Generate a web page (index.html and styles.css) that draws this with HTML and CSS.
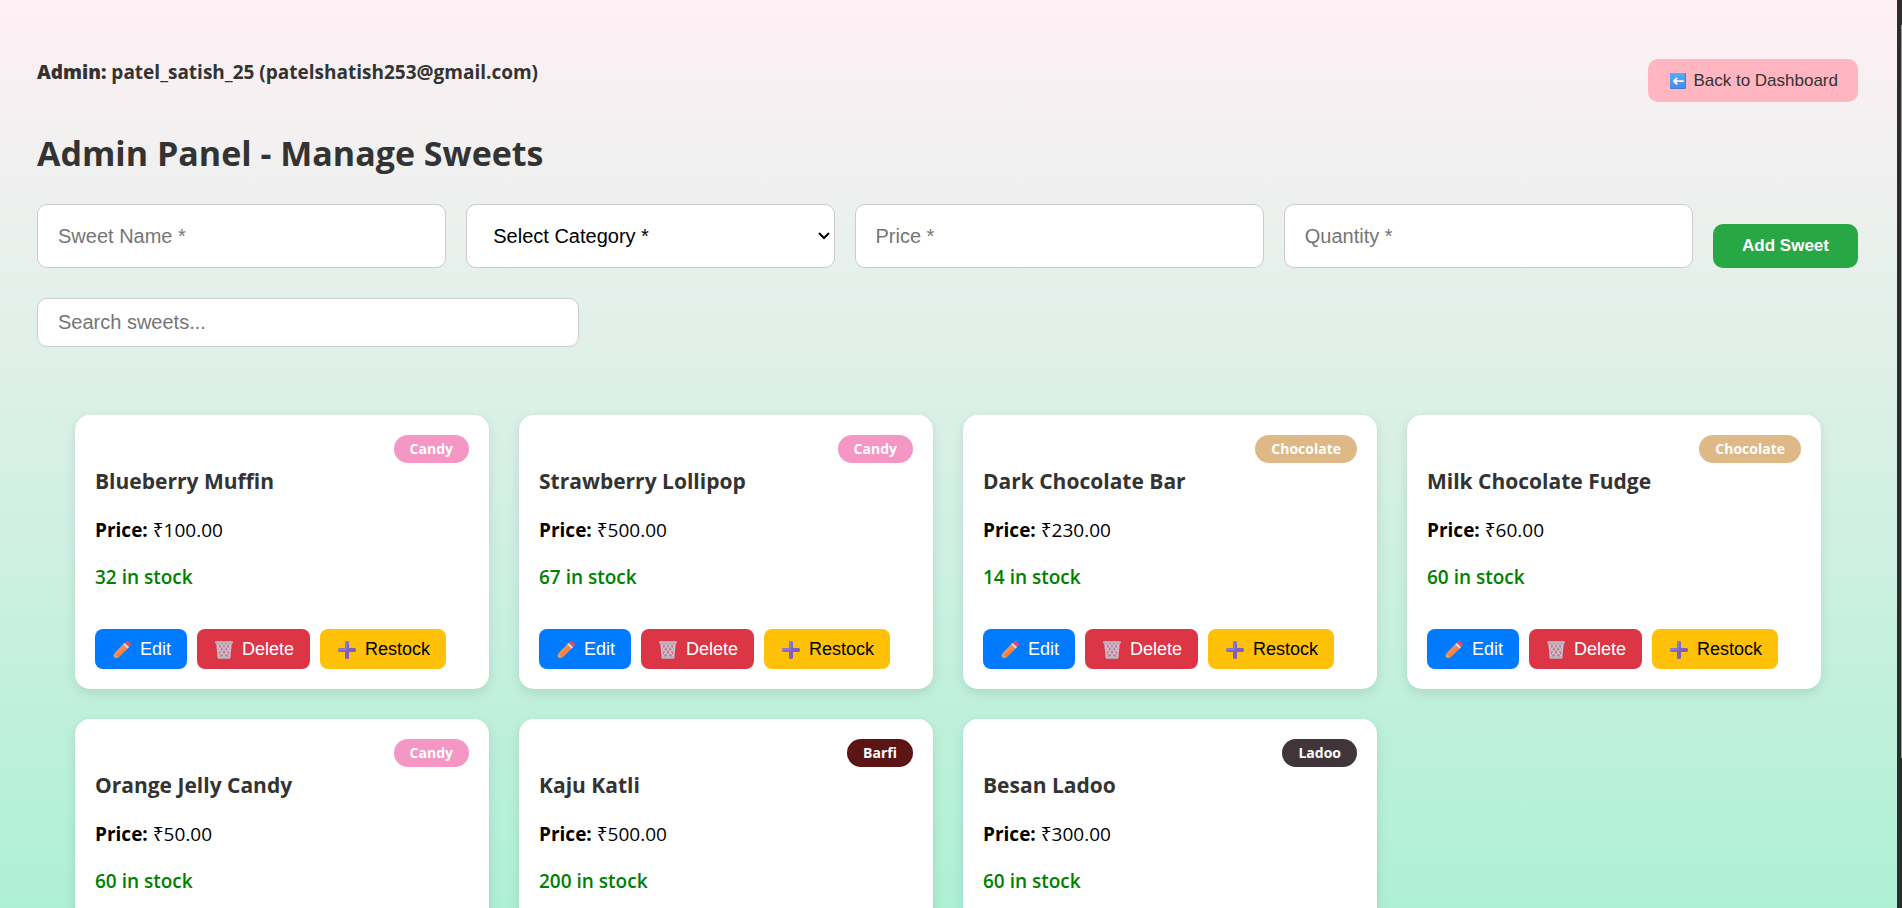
FILE: index.html
```html
<!DOCTYPE html>
<html lang="en">
<head>
<meta charset="utf-8">
<title>Admin Panel - Manage Sweets</title>
<link rel="stylesheet" href="styles.css">
</head>
<body>
<svg class="defs" aria-hidden="true">
  <defs>
    <linearGradient id="blue" x1="0" y1="0" x2="0" y2="1"><stop offset="0" stop-color="#54acf8"/><stop offset="1" stop-color="#4a8bea"/></linearGradient>
    <linearGradient id="wood" x1="0" y1="0" x2="1" y2="1"><stop offset="0" stop-color="#ffa35c"/><stop offset="1" stop-color="#f4682c"/></linearGradient>
    <linearGradient id="violet" x1="0" y1="0" x2="1" y2="1"><stop offset="0" stop-color="#7f78d8"/><stop offset="1" stop-color="#7f50b5"/></linearGradient>
  </defs>
  <symbol id="i-back" viewBox="0 0 16 16">
    <rect width="16" height="16" rx="1" fill="#3c7fe0"/>
    <rect x="0" y="0" width="15" height="15" rx="1" fill="url(#blue)"/>
    <path d="M6.6 5.4 3.8 8.1 6.6 10.8M4 8.1h9" fill="none" stroke="#fff" stroke-width="1.9" stroke-linecap="round" stroke-linejoin="round"/>
  </symbol>
  <symbol id="i-edit" viewBox="0 0 18 18">
    <path d="M.2 17.6 1.2 12.4 5.6 16.6z" fill="#d9a48c"/>
    <path d="M.2 17.6.7 15.6 2.3 17.1z" fill="#5c4350"/>
    <path d="M1.2 12.4 10 3.4 14.6 7.8 5.6 16.6z" fill="url(#wood)"/>
    <path d="M10 3.4 11.7 1.7 16.2 6.1 14.6 7.8z" fill="#e3d6e6"/>
    <path d="M11.7 1.7 13 .7Q14 -.1 15.2.6L17.3 2.6Q18.3 3.7 17.3 5L16.2 6.1z" fill="#ee4d50"/>
  </symbol>
  <symbol id="i-delete" viewBox="0 0 18 18">
    <path d="M1 1.5h16L15.2 17H2.8z" fill="#b9aebf" fill-opacity=".6"/>
    <path d="M2 2 3.4 16.5M16 2 14.6 16.5M2.5 5 10 16M5 2l9 13M9 2l6 9M13 2l2.6 4M15.5 5 8 16M13 2 4 15M9 2 3 11M5 2 2.4 6" fill="none" stroke="#cdc6d3" stroke-width="1.2"/>
    <rect x="0" y="0" width="18" height="2.6" rx=".8" fill="#b8b1bd"/>
    <rect x="2.6" y="15.3" width="12.8" height="2.5" rx=".8" fill="#bcb5c1"/>
  </symbol>
  <symbol id="i-restock" viewBox="0 0 18 18">
    <path d="M7 1.2Q7 0 9 0T11 1.2V7h5.8Q18 7 18 9t-1.2 2H11v5.8Q11 18 9 18T7 16.8V11H1.2Q0 11 0 9t1.2-2H7z" fill="url(#violet)"/>
    <path d="M8.3 1v7.2H1" fill="none" stroke="#9d93e2" stroke-width=".8"/>
  </symbol>
</svg>

<div class="page">
  <header class="topbar">
    <p class="who"><strong>Admin:</strong> patel_satish_25 (patelshatish253@gmail.com)</p>
    <button class="back" type="button"><svg class="icon-sm" aria-hidden="true"><use href="#i-back"/></svg>Back to Dashboard</button>
  </header>

  <main>
    <h1>Admin Panel - Manage Sweets</h1>

    <form class="add-form">
      <input class="field" type="text" placeholder="Sweet Name *" aria-label="Sweet Name">
      <select class="field category" aria-label="Category"><option>Select Category *</option><option>Candy</option><option>Chocolate</option><option>Barfi</option><option>Ladoo</option></select>
      <input class="field" type="text" placeholder="Price *" aria-label="Price">
      <input class="field" type="text" placeholder="Quantity *" aria-label="Quantity">
      <button class="add" type="button">Add Sweet</button>
    </form>

    <input class="search" type="text" placeholder="Search sweets..." aria-label="Search sweets">

    <section class="grid" id="grid" aria-label="Sweets"></section>
  </main>
</div>
<div class="scrollbar" aria-hidden="true"><div class="thumb"></div></div>
<script src="sweets.js"></script>
</body>
</html>
```
FILE: sweets.js
```js
const sweets = [
  ["Blueberry Muffin", "Candy", "100.00", 32],
  ["Strawberry Lollipop", "Candy", "500.00", 67],
  ["Dark Chocolate Bar", "Chocolate", "230.00", 14],
  ["Milk Chocolate Fudge", "Chocolate", "60.00", 60],
  ["Orange Jelly Candy", "Candy", "50.00", 60],
  ["Kaju Katli", "Barfi", "500.00", 200],
  ["Besan Ladoo", "Ladoo", "300.00", 60]
];

const action = (kind, label) =>
  `<button class="btn ${kind}" type="button"><svg class="icon" aria-hidden="true"><use href="#i-${kind}"/></svg>${label}</button>`;

document.getElementById("grid").innerHTML = sweets.map(([name, category, price, stock]) => `
  <article class="card">
    <span class="badge ${category.toLowerCase()}">${category}</span>
    <h2>${name}</h2>
    <p class="price"><strong>Price:</strong> ₹${price}</p>
    <p class="stock">${stock} in stock</p>
    <div class="actions">${action("edit", "Edit")}${action("delete", "Delete")}${action("restock", "Restock")}</div>
  </article>`).join("");
```
FILE: styles.css
```css
* { box-sizing: border-box; }

body {
  margin: 0;
  height: 100vh;
  display: flex;
  font-family: "Open Sans", "Noto Sans", sans-serif;
  color: #000;
  background: linear-gradient(to bottom, #fff0f5, #aef0d6);
}

.defs { position: absolute; width: 0; height: 0; }

button, input, select { font-family: "Liberation Sans", Arial, sans-serif; }

.page {
  flex: 1;
  min-width: 0;
  padding: 59px 39px 0 37px;
  overflow-y: auto;
  scrollbar-width: none;
}

.topbar { display: flex; justify-content: space-between; align-items: flex-start; }

.who { margin: 0; font-size: 19px; line-height: 26px; font-weight: 700; color: #333; }
.who strong { font-weight: 800; }

.back {
  display: flex;
  align-items: center;
  gap: 7px;
  height: 43px;
  padding: 1px 20px 0 22px;
  border: 0;
  border-radius: 10px;
  background: #ffb6c1;
  color: #333;
  font-size: 17px;
}
.icon-sm { width: 16px; height: 16px; }

h1 { margin: 25px 0; font-size: 34px; line-height: 52px; font-weight: 700; color: #333; }

.add-form { display: flex; align-items: flex-end; gap: 20px; }

.field, .search {
  min-width: 0;
  border: 1px solid #ccc;
  border-radius: 10px;
  background: #fff;
  padding: 0 20px;
  font-size: 20px;
  color: #000;
}
.field { flex: 1 1 409px; height: 64px; }
.category {
  flex-basis: 368px;
  padding: 0 26px;
  appearance: none;
  background: #fff url("data:image/svg+xml,%3Csvg xmlns='http://www.w3.org/2000/svg' width='12' height='8'%3E%3Cpath d='M1 1l5 5 5-5' fill='none' stroke='%23000' stroke-width='2'/%3E%3C/svg%3E") no-repeat right 4px center;
}
.field::placeholder, .search::placeholder { color: #757575; }

.add {
  width: 145px;
  height: 44px;
  border: 0;
  border-radius: 10px;
  background: #28a745;
  color: #fff;
  font-size: 17px;
  font-weight: 700;
}

.search { display: block; width: 542px; height: 49px; margin-top: 30px; }

.grid {
  display: grid;
  grid-template-columns: repeat(4, 1fr);
  gap: 30px;
  padding: 68px 37px 30px 38px;
}

.card {
  display: flex;
  flex-direction: column;
  padding: 20px;
  border-radius: 15px;
  background: #fff;
  box-shadow: 0 4px 12px rgba(0, 0, 0, 0.1);
}

.badge {
  align-self: flex-end;
  padding: 0 16px;
  border-radius: 14px;
  color: #fff;
  font-size: 14px;
  line-height: 28px;
  font-weight: 700;
}
.candy { background: #f497c4; }
.chocolate { background: #deb887; }
.barfi { background: #5c1414; }
.ladoo { background: #40363a; }

.card h2 { margin: 4px 0 22px; font-size: 21px; line-height: 28px; font-weight: 700; color: #333; }
.card p { margin: 0 0 20px; font-size: 19px; line-height: 27px; }
.card .stock { margin-bottom: 38px; color: green; font-weight: 600; }

.actions { display: flex; gap: 10px; }

.btn {
  display: flex;
  align-items: center;
  gap: 9px;
  height: 40px;
  padding: 1px 16px 0 18px;
  border: 0;
  border-radius: 8px;
  font-size: 18px;
  color: #fff;
}
.icon { width: 18px; height: 18px; }
.edit { background: #007bff; }
.delete { background: #dc3545; }
.restock { background: #ffc107; color: #000; }

.scrollbar { width: 5px; padding: 25px 0 0 4px; background: #2c2c2c; }
.thumb { height: 83%; background: #9f9f9f; }
```
